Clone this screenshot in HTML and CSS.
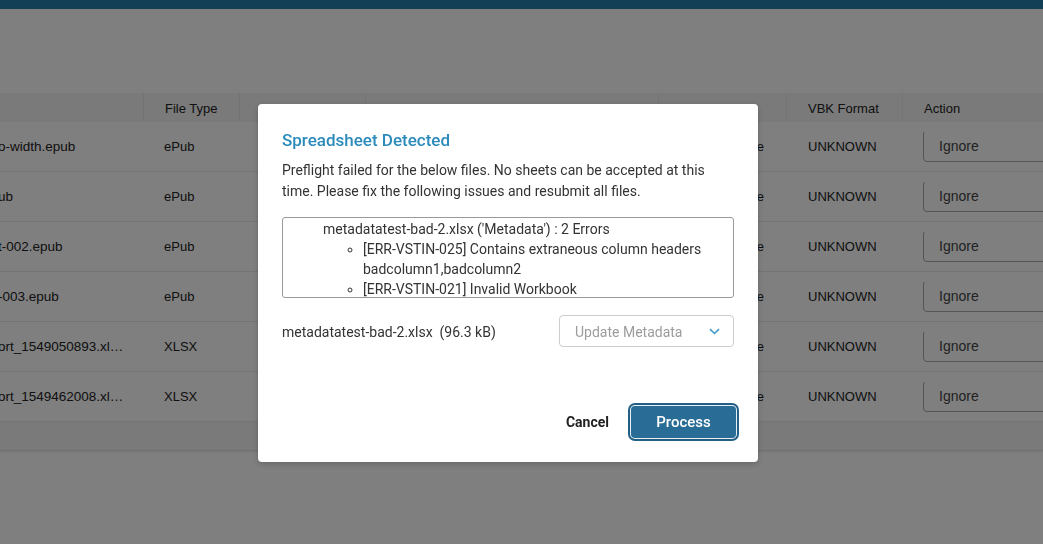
FILE: index.html
```html
<!DOCTYPE html>
<html>
<head>
<meta charset="utf-8">
<link rel="stylesheet" href="styles.css">
</head>
<body>
<div class="topbar"></div>
<div class="page">
  <div class="table">
    <div class="row head">
      <div class="cell c1"></div>
      <div class="cell">File Type</div>
      <div class="cell"></div>
      <div class="cell"></div>
      <div class="cell"></div>
      <div class="cell">VBK Format</div>
      <div class="cell">Action</div>
    </div>
    <div class="row">
      <div class="cell c1"><span class="clip">o-width.epub</span></div>
      <div class="cell">ePub</div>
      <div class="cell"></div>
      <div class="cell"></div>
      <div class="cell c5">None</div>
      <div class="cell">UNKNOWN</div>
      <div class="cell"><div class="ignore">Ignore</div></div>
    </div>
    <div class="row">
      <div class="cell c1"><span class="clip">ub</span></div>
      <div class="cell">ePub</div>
      <div class="cell"></div>
      <div class="cell"></div>
      <div class="cell c5">None</div>
      <div class="cell">UNKNOWN</div>
      <div class="cell"><div class="ignore">Ignore</div></div>
    </div>
    <div class="row">
      <div class="cell c1"><span class="clip">t-002.epub</span></div>
      <div class="cell">ePub</div>
      <div class="cell"></div>
      <div class="cell"></div>
      <div class="cell c5">None</div>
      <div class="cell">UNKNOWN</div>
      <div class="cell"><div class="ignore">Ignore</div></div>
    </div>
    <div class="row">
      <div class="cell c1"><span class="clip">-003.epub</span></div>
      <div class="cell">ePub</div>
      <div class="cell"></div>
      <div class="cell"></div>
      <div class="cell c5">None</div>
      <div class="cell">UNKNOWN</div>
      <div class="cell"><div class="ignore">Ignore</div></div>
    </div>
    <div class="row">
      <div class="cell c1"><span class="clip">ort_1549050893.xl…</span></div>
      <div class="cell">XLSX</div>
      <div class="cell"></div>
      <div class="cell"></div>
      <div class="cell c5">None</div>
      <div class="cell">UNKNOWN</div>
      <div class="cell"><div class="ignore">Ignore</div></div>
    </div>
    <div class="row">
      <div class="cell c1"><span class="clip">ort_1549462008.xl…</span></div>
      <div class="cell">XLSX</div>
      <div class="cell"></div>
      <div class="cell"></div>
      <div class="cell c5">None</div>
      <div class="cell">UNKNOWN</div>
      <div class="cell"><div class="ignore">Ignore</div></div>
    </div>
    <div class="tfoot"></div>
  </div>
</div>

<div class="overlay"></div>

<div class="modal">
  <h2 class="modal-title">Spreadsheet Detected</h2>
  <p class="modal-text">Preflight failed for the below files. No sheets can be accepted at this time. Please fix the following issues and resubmit all files.</p>
  <div class="errors">
    <ul class="err-list">
      <li>metadatatest-bad-2.xlsx ('Metadata') : 2 Errors
        <ul class="err-sub">
          <li>[ERR-VSTIN-025] Contains extraneous column headers badcolumn1,badcolumn2</li>
          <li>[ERR-VSTIN-021] Invalid Workbook</li>
        </ul>
      </li>
    </ul>
  </div>
  <div class="file-row">
    <span class="file-name">metadatatest-bad-2.xlsx&nbsp;&nbsp;(96.3 kB)</span>
    <div class="select">
      <span>Update Metadata</span>
      <svg width="11" height="7" viewBox="0 0 11 7"><path d="M1 1.2 L5.5 5.5 L10 1.2" fill="none" stroke="#3d9ccb" stroke-width="1.6"/></svg>
    </div>
  </div>
  <div class="actions">
    <button class="btn-cancel">Cancel</button>
    <button class="btn-process">Process</button>
  </div>
</div>
</body>
</html>
```

FILE: styles.css
```css
html, body {
  margin: 0;
  padding: 0;
  background: #fff;
  width: 1043px;
  height: 544px;
  overflow: hidden;
}
body {
  font-family: "Liberation Sans", Arial, sans-serif;
  color: #333;
  font-size: 13px;
}
.topbar {
  height: 9px;
  background: #247ead;
}
.page {
  padding-top: 84px;
}
.table {
  display: flex;
  flex-direction: column;
}
.row {
  display: grid;
  grid-template-columns: 144px 96px 126px 293px 128px 116px 140px;
  height: 49px;
  border-bottom: 1px solid #e9e9e9;
  align-items: center;
}
.row.head {
  height: 29px;
  background: #f4f4f4;
  border-bottom: none;
  align-items: stretch;
}
.row.head .cell {
  border-right: 1px solid #e8e8e8;
  display: flex;
  align-items: center;
  padding-top: 1px;
}
.row.head .cell:last-child {
  border-right: none;
}
.cell {
  padding-left: 20px;
  white-space: nowrap;
  overflow: hidden;
  color: #222;
  font-size: 13px;
}
.row.head .cell { padding-left: 21px; }
.row .cell:nth-child(6) { padding-left: 21px; }
.cell.c1 {
  padding-left: 0;
  font-size: 13.5px;
}
.clip {
  display: inline-block;
  margin-left: -2px;
}
.cell.c5 {
  text-align: right;
  padding-left: 0;
  padding-right: 23px;
}
.ignore {
  width: 150px;
  height: 32px;
  border: 1px solid #a9a9a9;
  border-radius: 4px;
  box-sizing: border-box;
  padding-left: 15px;
  display: flex;
  align-items: center;
  font-size: 14px;
  color: #444;
  margin-top: -2px;
}
.tfoot {
  height: 28px;
  background: #f4f4f4;
  border-bottom: 1px solid #e2e2e2;
  box-shadow: 0 1px 2px rgba(0,0,0,0.08);
}

.overlay {
  position: fixed;
  inset: 0;
  background: rgba(0, 0, 0, 0.5);
}

.modal {
  position: fixed;
  left: 258px;
  top: 104px;
  width: 500px;
  height: 358px;
  box-sizing: border-box;
  background: #fff;
  border-radius: 4px;
  box-shadow: 0 2px 6px rgba(0,0,0,0.2);
  padding: 26px 24px 24px 24px;
  font-family: Roboto, "Liberation Sans", sans-serif;
  display: flex;
  flex-direction: column;
}
.modal-title {
  margin: 0;
  font-size: 17px;
  line-height: 20px;
  font-weight: 500;
  color: #2b8bbb;
}
.modal-text {
  margin: 10px 0 0 0;
  font-size: 14px;
  line-height: 21px;
  color: #333;
}
.errors {
  margin-top: 15px;
  height: 78px;
  padding-top: 1px;
  box-sizing: content-box;
  border: 1px solid #9a9a9a;
  border-radius: 3px;
  overflow: hidden;
  font-size: 14px;
  line-height: 20px;
  color: #333;
}
.err-list {
  margin: 0;
  padding-left: 40px;
  list-style: none;
}
.err-sub {
  margin: 0;
  padding-left: 40px;
  list-style: circle;
}
.file-row {
  margin-top: 17px;
  display: flex;
  align-items: center;
  justify-content: space-between;
  font-size: 14px;
  color: #333;
}
.file-name {
  padding-top: 2px;
}
.select {
  width: 175px;
  height: 32px;
  box-sizing: border-box;
  border: 1px solid #cdcdcd;
  border-radius: 4px;
  display: flex;
  align-items: center;
  justify-content: space-between;
  padding: 1px 13px 0 15px;
  color: #9c9c9c;
  font-size: 14px;
}
.actions {
  margin-top: auto;
  display: flex;
  justify-content: flex-end;
  align-items: center;
  gap: 22px;
  margin-right: -2px;
}
.btn-cancel {
  background: none;
  border: none;
  padding: 0;
  font-family: Roboto, "Liberation Sans", sans-serif;
  font-size: 14px;
  font-weight: 700;
  color: #222;
}
.btn-process {
  width: 105px;
  height: 32px;
  border: none;
  border-radius: 4px;
  background: #296c95;
  color: #fff;
  font-family: Roboto, "Liberation Sans", sans-serif;
  font-size: 15px;
  font-weight: 500;
  box-shadow: 0 0 0 1px #e8eef2, 0 0 0 3px #225f85;
}
```
